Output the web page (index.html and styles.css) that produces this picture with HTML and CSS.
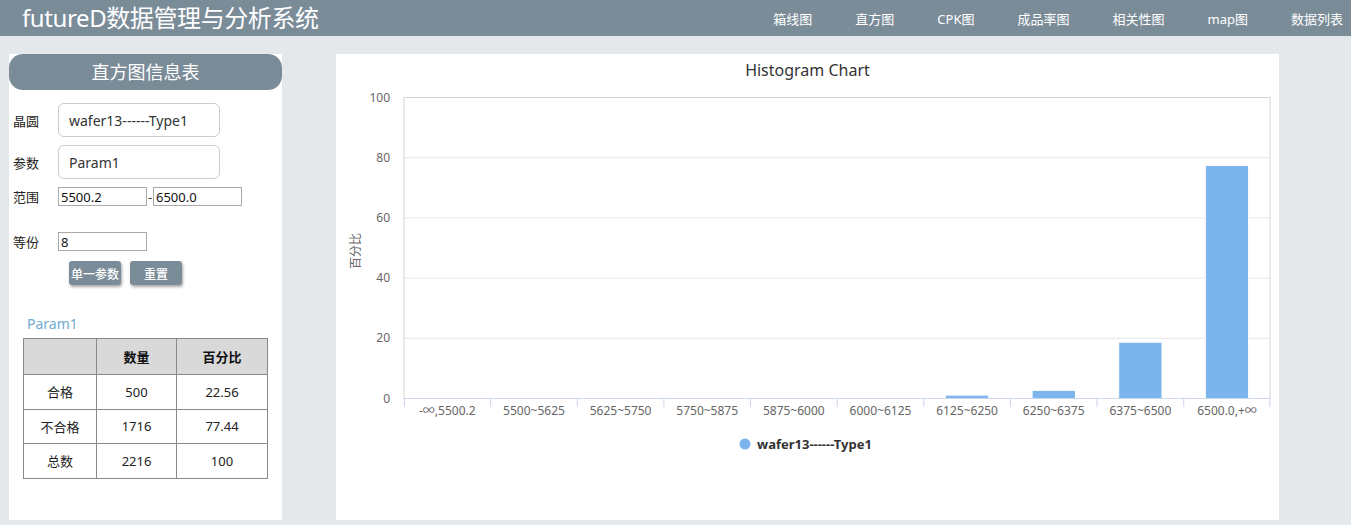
FILE: index.html
```html
<!DOCTYPE html>
<html lang="zh-CN">
<head>
<meta charset="utf-8">
<title>futureD数据管理与分析系统</title>
<link rel="stylesheet" href="styles.css">
</head>
<body>
<header class="topbar">
  <h1 class="brand">futureD数据管理与分析系统</h1>
  <nav class="nav">
    <a>箱线图</a><a>直方图</a><a>CPK图</a><a>成品率图</a><a>相关性图</a><a>map图</a><a>数据列表</a>
  </nav>
</header>
<main class="main">
  <section class="side">
    <div class="pill">直方图信息表</div>
    <div class="form">
      <div class="row r1"><span class="lbl">晶圆</span><input class="big" value="wafer13------Type1"></div>
      <div class="row r2"><span class="lbl">参数</span><input class="big" value="Param1"></div>
      <div class="row r3"><span class="lbl">范围</span><input class="small" value="5500.2"><span class="dash">-</span><input class="small" value="6500.0"></div>
      <div class="row r4"><span class="lbl">等份</span><input class="small" value="8"></div>
      <div class="btns"><button class="btn">单一参数</button><button class="btn">重置</button></div>
    </div>
    <div class="ptitle">Param1</div>
    <table class="stats">
      <thead><tr><th class="c1"></th><th class="c2">数量</th><th class="c3">百分比</th></tr></thead>
      <tbody>
        <tr><td>合格</td><td>500</td><td>22.56</td></tr>
        <tr><td>不合格</td><td>1716</td><td>77.44</td></tr>
        <tr><td>总数</td><td>2216</td><td>100</td></tr>
      </tbody>
    </table>
  </section>
  <section class="chart">
    <svg class="chart-svg" width="943" height="466" viewBox="0 0 943 466">
      <text x="471.5" y="22" class="ctitle" text-anchor="middle">Histogram Chart</text>
      <g class="grid">
        <line x1="68" x2="934" y1="284.3" y2="284.3"/>
        <line x1="68" x2="934" y1="224.1" y2="224.1"/>
        <line x1="68" x2="934" y1="163.9" y2="163.9"/>
        <line x1="68" x2="934" y1="103.7" y2="103.7"/>
      </g>
      <rect class="pborder" x="68" y="43.5" width="866" height="301"/>
      <g class="ylab" text-anchor="end">
        <text x="54" y="48">100</text>
        <text x="54" y="108">80</text>
        <text x="54" y="168">60</text>
        <text x="54" y="228">40</text>
        <text x="54" y="288">20</text>
        <text x="54" y="349">0</text>
      </g>
      <text class="ytitle" transform="translate(24 197) rotate(-90)" text-anchor="middle">百分比</text>
      <g class="bars">
        <rect x="609.4" y="341.1" width="43.3" height="3.4"/>
        <rect x="696.1" y="336.3" width="43.3" height="8.2"/>
        <rect x="782.7" y="288.2" width="43.3" height="56.3"/>
        <rect x="869.3" y="111.4" width="43.3" height="233.1"/>
      </g>
      <line class="axis" x1="68" x2="934.3" y1="344.5" y2="344.5"/>
      <g class="ticks">
        <line x1="68.5" x2="68.5" y1="344.5" y2="353"/>
        <line x1="154.6" x2="154.6" y1="344.5" y2="353"/>
        <line x1="241.3" x2="241.3" y1="344.5" y2="353"/>
        <line x1="327.9" x2="327.9" y1="344.5" y2="353"/>
        <line x1="414.5" x2="414.5" y1="344.5" y2="353"/>
        <line x1="501.2" x2="501.2" y1="344.5" y2="353"/>
        <line x1="587.8" x2="587.8" y1="344.5" y2="353"/>
        <line x1="674.4" x2="674.4" y1="344.5" y2="353"/>
        <line x1="761.0" x2="761.0" y1="344.5" y2="353"/>
        <line x1="847.7" x2="847.7" y1="344.5" y2="353"/>
        <line x1="933.8" x2="933.8" y1="344.5" y2="353"/>
      </g>
      <g class="xlab" text-anchor="middle">
        <text x="111.3" y="361">-∞,5500.2</text>
        <text x="198.0" y="361">5500~5625</text>
        <text x="284.6" y="361">5625~5750</text>
        <text x="371.2" y="361">5750~5875</text>
        <text x="457.8" y="361">5875~6000</text>
        <text x="544.5" y="361">6000~6125</text>
        <text x="631.1" y="361">6125~6250</text>
        <text x="717.7" y="361">6250~6375</text>
        <text x="804.4" y="361">6375~6500</text>
        <text x="891.0" y="361">6500.0,+∞</text>
      </g>
      <circle class="ldot" cx="409" cy="390" r="5.5"/>
      <text class="ltext" x="421" y="394.5">wafer13------Type1</text>
    </svg>
  </section>
</main>
</body>
</html>
```
FILE: styles.css
```css
* { box-sizing: border-box; }
html, body { margin: 0; padding: 0; }
body {
  background: #e4e8eb;
  font-family: "Noto Sans", "Noto Sans CJK SC", sans-serif;
  color: #333;
  width: 1351px;
  height: 525px;
  overflow: hidden;
}
.topbar {
  height: 36px;
  background: #7b8c99;
  display: flex;
  align-items: center;
  justify-content: space-between;
  padding: 0 8px 0 22px;
}
.brand {
  margin: 0;
  font-size: 24px;
  font-weight: normal;
  color: #fff;
  line-height: 36px;
  letter-spacing: -0.4px;
}
.nav {
  display: flex;
  gap: 43px;
  font-size: 13px;
  color: #fff;
}
.nav a { color: #fff; text-decoration: none; }
.main {
  display: flex;
  gap: 54px;
  padding: 18px 0 0 9px;
}
.side {
  width: 273px;
  height: 466px;
  background: #fff;
}
.pill {
  height: 36px;
  line-height: 36px;
  border-radius: 14px;
  background: #7b8c99;
  color: #fff;
  font-size: 18px;
  text-align: center;
}
.form { padding: 13px 0 0 4px; }
.row {
  display: flex;
  align-items: center;
}
.lbl {
  width: 45px;
  font-size: 13px;
  color: #222;
}
.r2 { margin-top: 8px; }
.r3 { margin-top: 8px; }
.r4 { margin-top: 26px; }
.big {
  width: 162px;
  height: 34px;
  border: 1px solid #ccc;
  border-radius: 6px;
  padding: 0 10px;
  font-family: "Noto Sans", "Noto Sans CJK SC", sans-serif;
  font-size: 14px;
  color: #333;
}
.small {
  width: 89px;
  height: 19px;
  border: 1px solid #a9a9a9;
  border-radius: 0;
  padding: 0 2px;
  font-family: "Noto Sans", "Noto Sans CJK SC", sans-serif;
  font-size: 13px;
  color: #111;
}
.dash { font-size: 13px; width: 6px; text-align: center; }
.btns {
  display: flex;
  gap: 9px;
  margin: 10px 0 0 56px;
}
.btn {
  width: 52px;
  height: 24px;
  padding: 0;
  border: none;
  border-radius: 3px;
  background: #7b8c99;
  color: #fff;
  font-family: "Noto Sans CJK SC", sans-serif;
  font-size: 12px;
  font-weight: 500;
  box-shadow: 1px 2px 3px rgba(0,0,0,0.35);
}
.ptitle {
  margin: 29px 0 0 18px;
  font-size: 14px;
  line-height: 20px;
  color: #72aad2;
}
.stats {
  margin: 4px 0 0 14px;
  width: 245px;
  border-collapse: collapse;
  border: 1px solid #333;
  font-size: 13px;
}
.stats th, .stats td {
  border: 1px solid #888;
  text-align: center;
  padding: 0;
}
.stats th {
  height: 36px;
  background: #d9d9d9;
  font-weight: bold;
  color: #111;
}
.stats td { height: 34.5px; color: #222; }
.c1 { width: 73px; }
.c2 { width: 80px; }
.chart {
  width: 943px;
  height: 466px;
  background: #fff;
}
.chart-svg {
  display: block;
  font-family: "Noto Sans", "Noto Sans CJK SC", sans-serif;
}
.ctitle { font-size: 16px; fill: #333; }
.grid line { stroke: #e6e6e6; stroke-width: 1; }
.pborder { fill: none; stroke: #d4d4d4; stroke-width: 1; }
.ylab text { font-size: 12px; fill: #666; }
.ytitle { font-size: 12px; fill: #666; }
.bars rect { fill: #7cb5ec; stroke: #fff; stroke-width: 1; }
.axis { stroke: #ccd6eb; stroke-width: 1; }
.ticks line { stroke: #ccd6eb; stroke-width: 1; }
.xlab text { font-size: 12px; fill: #666; }
.ldot { fill: #7cb5ec; }
.ltext { font-size: 13px; font-weight: bold; fill: #333; }
```
